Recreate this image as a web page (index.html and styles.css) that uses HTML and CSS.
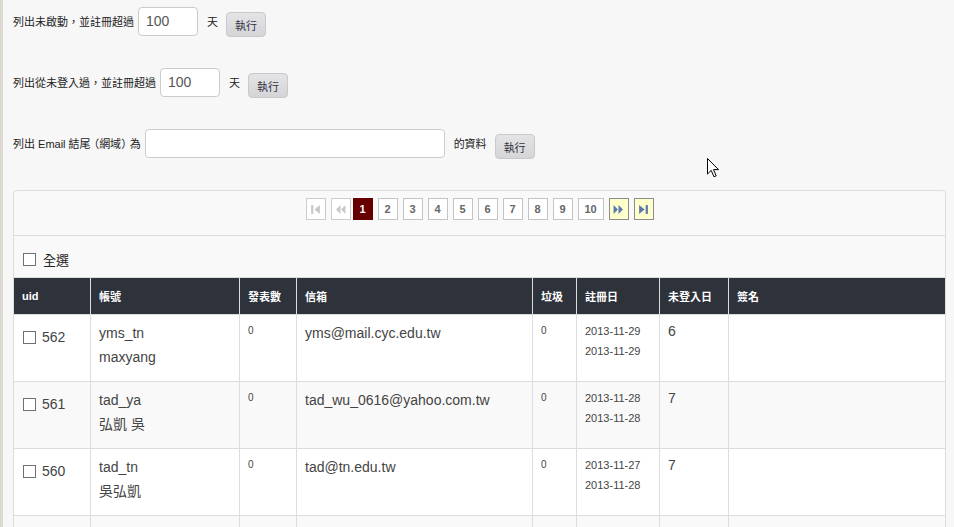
FILE: index.html
```html
<!DOCTYPE html>
<html lang="zh-Hant">
<head>
    <meta charset="UTF-8">
    <meta name="viewport" content="width=device-width, initial-scale=1.0">
    <title>帳號管理</title>
    <link rel="stylesheet" href="styles.css">
</head>
<body>
    <div class="page">
        <!-- Filters -->
        <form class="filter-row">
            <label class="filter-label" for="never-active">列出未啟動，並註冊超過</label>
            <input type="text" id="never-active" class="filter-input" value="100">
            <span class="filter-unit">天</span>
            <button type="submit" class="btn">執行</button>
        </form>

        <form class="filter-row">
            <label class="filter-label" for="never-login">列出從未登入過，並註冊超過</label>
            <input type="text" id="never-login" class="filter-input" value="100">
            <span class="filter-unit">天</span>
            <button type="submit" class="btn">執行</button>
        </form>

        <form class="filter-row">
            <label class="filter-label" for="email-domain">列出 Email 結尾<span class="paren-open">（</span>網域<span class="paren-close">）</span>為</label>
            <input type="text" id="email-domain" class="filter-input filter-input-wide" value="">
            <span class="filter-unit">的資料</span>
            <button type="submit" class="btn">執行</button>
        </form>

        <div class="panel">
            <div class="pager">
                <a class="page-link page-disabled" title="第一頁">
                    <svg width="11" height="11" viewBox="0 0 10 10"><rect x="1" y="1" width="2" height="8"/><polygon points="9,1 9,9 4,5"/></svg>
                </a>
                <a class="page-link page-disabled" title="上一頁">
                    <svg width="11" height="11" viewBox="0 0 10 10"><polygon points="5,1 5,9 1,5"/><polygon points="9.5,1 9.5,9 5.5,5"/></svg>
                </a>
                <a class="page-link page-current">1</a>
                <a class="page-link">2</a>
                <a class="page-link">3</a>
                <a class="page-link">4</a>
                <a class="page-link">5</a>
                <a class="page-link">6</a>
                <a class="page-link">7</a>
                <a class="page-link">8</a>
                <a class="page-link">9</a>
                <a class="page-link page-wide">10</a>
                <a class="page-link page-jump" title="下一頁">
                    <svg width="11" height="11" viewBox="0 0 10 10"><polygon points="0.5,1 0.5,9 4.5,5"/><polygon points="5,1 5,9 9,5"/></svg>
                </a>
                <a class="page-link page-jump" title="最後一頁">
                    <svg width="11" height="11" viewBox="0 0 10 10"><polygon points="1,1 1,9 6,5"/><rect x="7" y="1" width="2" height="8"/></svg>
                </a>
            </div>

            <label class="select-all">
                <input type="checkbox" class="check">
                <span>全選</span>
            </label>

            <table class="user-table">
                <colgroup>
                    <col class="col-uid">
                    <col class="col-account">
                    <col class="col-posts">
                    <col class="col-email">
                    <col class="col-spam">
                    <col class="col-date">
                    <col class="col-days">
                    <col class="col-sig">
                </colgroup>
                <thead>
                    <tr>
                        <th>uid</th>
                        <th>帳號</th>
                        <th>發表數</th>
                        <th>信箱</th>
                        <th>垃圾</th>
                        <th>註冊日</th>
                        <th>未登入日</th>
                        <th>簽名</th>
                    </tr>
                </thead>
                <tbody>
                    <tr>
                        <td class="cell-uid"><input type="checkbox" class="check">562</td>
                        <td class="cell-account">yms_tn<br>maxyang</td>
                        <td class="cell-small">0</td>
                        <td class="cell-email">yms@mail.cyc.edu.tw</td>
                        <td class="cell-small">0</td>
                        <td class="cell-date">2013-11-29<br>2013-11-29</td>
                        <td class="cell-days">6</td>
                        <td></td>
                    </tr>
                    <tr>
                        <td class="cell-uid"><input type="checkbox" class="check">561</td>
                        <td class="cell-account">tad_ya<br>弘凱 吳</td>
                        <td class="cell-small">0</td>
                        <td class="cell-email">tad_wu_0616@yahoo.com.tw</td>
                        <td class="cell-small">0</td>
                        <td class="cell-date">2013-11-28<br>2013-11-28</td>
                        <td class="cell-days">7</td>
                        <td></td>
                    </tr>
                    <tr>
                        <td class="cell-uid"><input type="checkbox" class="check">560</td>
                        <td class="cell-account">tad_tn<br>吳弘凱</td>
                        <td class="cell-small">0</td>
                        <td class="cell-email">tad@tn.edu.tw</td>
                        <td class="cell-small">0</td>
                        <td class="cell-date">2013-11-27<br>2013-11-28</td>
                        <td class="cell-days">7</td>
                        <td></td>
                    </tr>
                    <tr>
                        <td class="cell-uid"><input type="checkbox" class="check">559</td>
                        <td class="cell-account">tad_ks<br>吳弘凱</td>
                        <td class="cell-small">0</td>
                        <td class="cell-email">tad@ks.edu.tw</td>
                        <td class="cell-small">0</td>
                        <td class="cell-date">2013-11-27<br>2013-11-27</td>
                        <td class="cell-days">8</td>
                        <td></td>
                    </tr>
                </tbody>
            </table>
        </div>
    </div>

    <!-- mouse pointer in the screenshot -->
    <svg class="pointer" width="13" height="20" viewBox="0 0 13 20">
        <path d="M0.5,0.5 L0.5,16 L4.2,12.4 L7,18.8 L9.2,17.8 L6.5,11.6 L11.5,11.6 Z" fill="#fff" stroke="#000" stroke-width="1"/>
    </svg>
</body>
</html>
```

FILE: styles.css
```css
* {
    box-sizing: border-box;
}

body {
    margin: 0;
    border-left: 3px solid #dcd9d0;
    background-color: #f7f7f7;
    font-family: "Liberation Sans", "Noto Sans CJK TC", sans-serif;
    color: #333;
    min-height: 100vh;
}

.page {
    padding: 7px 8px 0 10px;
}

/* Filter forms */

.filter-row {
    display: flex;
    align-items: flex-start;
    margin: 0 0 30px;
    font-size: 11px;
}

.filter-label,
.filter-unit {
    line-height: 31px;
    color: #222;
}

/* half-width brackets with a little air, like the original page */
.paren-open,
.paren-close {
    font-feature-settings: "halt";
}

.paren-open {
    padding-left: 3px;
}

.paren-close {
    padding-right: 3px;
}

.filter-input {
    margin-left: 4px;
    width: 60px;
    height: 29px;
    padding: 3px 7px 5px;
    border: 1px solid #ccc;
    border-radius: 4px;
    background-color: #fff;
    font-family: "Liberation Sans", sans-serif;
    font-size: 14px;
    color: #555;
}

.filter-input-wide {
    width: 300px;
}

.filter-unit {
    margin-left: 9px;
}

.btn {
    margin: 5px 0 0 8px;
    width: 40px;
    height: 25px;
    padding: 0;
    border: 1px solid #c9c9cc;
    border-radius: 4px;
    background: linear-gradient(#e4e4e6, #d5d5d8);
    font-family: "Liberation Sans", "Noto Sans CJK TC", sans-serif;
    font-size: 11px;
    color: #334;
    cursor: pointer;
}

/* Panel */

.panel {
    border: 1px solid #ddd;
    border-radius: 4px;
    background-color: #f9f9f9;
    overflow: hidden;
}

.pager {
    display: flex;
    justify-content: center;
    gap: 5px;
    padding: 7px 0 15px;
    border-bottom: 1px solid #ddd;
}

.page-link {
    display: flex;
    align-items: center;
    justify-content: center;
    width: 20px;
    height: 22px;
    border: 1px solid #c4c4c4;
    background-color: #fff;
    font-size: 11px;
    font-weight: bold;
    color: #666;
    cursor: pointer;
}

.page-wide {
    width: 26px;
}

.page-current {
    margin-left: -3px;
    border-color: #660000;
    background-color: #660000;
    color: #fff;
}

.page-disabled {
    border-color: #ccc;
    fill: #c8c8c8;
}

.page-jump {
    border-color: #8c8c8c;
    background-color: #ffffcc;
    fill: #5a79ad;
}

.select-all {
    display: flex;
    align-items: center;
    height: 41px;
    padding: 5px 9px 0;
    font-family: "Noto Sans CJK TC", sans-serif;
    font-size: 13px;
    color: #222;
}

.check {
    appearance: none;
    -webkit-appearance: none;
    width: 13px;
    height: 13px;
    margin: 0 7px 0 0;
    border: 1px solid #707070;
    background-color: #fff;
}

/* Table */

.user-table {
    width: 100%;
    table-layout: fixed;
    border-collapse: separate;
    border-spacing: 0;
}

.col-uid { width: 77px; }
.col-account { width: 149px; }
.col-posts { width: 57px; }
.col-email { width: 236px; }
.col-spam { width: 44px; }
.col-date { width: 83px; }
.col-days { width: 69px; }
.col-sig { width: 216px; }

.user-table th {
    height: 37px;
    padding: 0 8px;
    border-top: 1px solid #ddd;
    border-right: 1px solid #ddd;
    background-color: #2e323b;
    color: #fff;
    font-size: 11px;
    font-weight: bold;
    text-align: left;
}

.user-table td {
    height: 67px;
    padding: 6px 8px;
    border-top: 1px solid #ddd;
    border-right: 1px solid #ddd;
    background-color: #fff;
    vertical-align: top;
    line-height: 20px;
    color: #444;
}

.user-table th:last-child,
.user-table td:last-child {
    border-right: none;
}

.user-table tbody tr:nth-child(even) td {
    background-color: #f9f9f9;
}

.cell-uid {
    font-size: 14px;
    color: #555;
}

.user-table td.cell-uid {
    line-height: 32px;
}

.cell-uid .check {
    margin: 0 6px 0 1px;
    vertical-align: -2px;
}

.user-table td.cell-account,
.user-table td.cell-email {
    font-size: 14px;
    line-height: 24px;
}

.cell-small {
    font-size: 10px;
}

.cell-date {
    font-size: 11px;
}

.cell-days {
    font-size: 14px;
}

.pointer {
    position: absolute;
    left: 707px;
    top: 158px;
}
```
